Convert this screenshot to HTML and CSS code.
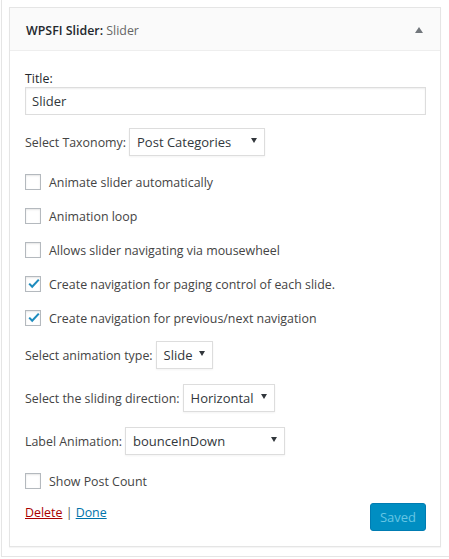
FILE: index.html
```html
<!DOCTYPE html>
<html>
<head>
<meta charset="utf-8">
<title>WPSFI Slider widget</title>
<link rel="stylesheet" href="styles.css">
</head>
<body>
<div class="holder">
  <div class="widget">
    <div class="widget-top">
      <h3 class="widget-title"><span class="name">WPSFI Slider:</span> <span class="in-title">Slider</span></h3>
      <svg class="toggle" width="8" height="6" viewBox="0 0 8 6"><polygon points="4,0 8,6 0,6" fill="#72777c"/></svg>
    </div>
    <div class="widget-inside">
      <label class="title-label">Title:</label>
      <div class="input">Slider</div>

      <div class="row row-tax">
        <span class="row-label">Select Taxonomy:</span>
        <span class="select w-tax"><span>Post Categories</span><svg class="caret" width="6" height="5" viewBox="0 0 6 5"><polygon points="0,0 6,0 3,5" fill="#32373c"/></svg></span>
      </div>

      <div class="check first"><span class="box"></span><span class="check-label">Animate slider automatically</span></div>
      <div class="check"><span class="box"></span><span class="check-label">Animation loop</span></div>
      <div class="check"><span class="box"></span><span class="check-label">Allows slider navigating via mousewheel</span></div>
      <div class="check"><span class="box"><svg width="16" height="16" viewBox="0 0 16 16"><path d="M4.2 7.6 L7.2 10.8 L13.8 3.6" fill="none" stroke="#1e8cbe" stroke-width="2.1"/></svg></span><span class="check-label">Create navigation for paging control of each slide.</span></div>
      <div class="check"><span class="box"><svg width="16" height="16" viewBox="0 0 16 16"><path d="M4.2 7.6 L7.2 10.8 L13.8 3.6" fill="none" stroke="#1e8cbe" stroke-width="2.1"/></svg></span><span class="check-label">Create navigation for previous/next navigation</span></div>

      <div class="row row-gap">
        <span class="row-label">Select animation type:</span>
        <span class="select w-type"><span>Slide</span><svg class="caret" width="6" height="5" viewBox="0 0 6 5"><polygon points="0,0 6,0 3,5" fill="#32373c"/></svg></span>
      </div>
      <div class="row row-gap">
        <span class="row-label">Select the sliding direction:</span>
        <span class="select w-dir"><span>Horizontal</span><svg class="caret" width="6" height="5" viewBox="0 0 6 5"><polygon points="0,0 6,0 3,5" fill="#32373c"/></svg></span>
      </div>
      <div class="row row-gap">
        <span class="row-label">Label Animation:</span>
        <span class="select w-anim"><span>bounceInDown</span><svg class="caret" width="6" height="5" viewBox="0 0 6 5"><polygon points="0,0 6,0 3,5" fill="#32373c"/></svg></span>
      </div>

      <div class="check first"><span class="box"></span><span class="check-label">Show Post Count</span></div>

      <div class="actions">
        <div class="links"><a class="delete" href="#">Delete</a> | <a class="done" href="#">Done</a></div>
        <span class="button">Saved</span>
      </div>
    </div>
  </div>
</div>
</body>
</html>
```
FILE: styles.css
```css
html, body {
  margin: 0;
  padding: 0;
  background: #fff;
  overflow: hidden;
}
body {
  font-family: "Open Sans", "Noto Sans", sans-serif;
  font-size: 12.4px;
  line-height: 17px;
  color: #444;
}
.holder {
  margin-left: 1px;
  border-left: 1px solid #e5e5e5;
  border-bottom: 1px solid #e5e5e5;
  box-shadow: 0 1px 1px rgba(0,0,0,.04);
  padding: 7px 0 9px 7px;
}
.widget {
  width: 432px;
  box-sizing: border-box;
  border: 1px solid #e5e5e5;
  box-shadow: 0 1px 1px rgba(0,0,0,.04);
  background: #fff;
}
.widget-top {
  height: 42px;
  background: #fafafa;
  border-bottom: 1px solid #eee;
  display: flex;
  justify-content: space-between;
  align-items: flex-start;
  padding: 0 17px 0 16px;
}
.widget-title {
  margin: 14px 0 0;
  font-size: 12.4px;
  line-height: 17px;
  font-weight: 400;
  color: #23282d;
}
.widget-title .name { font-weight: 600; }
.widget-title .in-title { color: #666; }
.toggle { margin-top: 19px; }
.widget-inside {
  padding: 19px 14px 15px 15px;
}
.title-label { display: block; color: #23282d; }
.input {
  height: 28px;
  box-sizing: border-box;
  border: 1px solid #ddd;
  box-shadow: inset 0 1px 2px rgba(0,0,0,.07);
  padding: 0 6px;
  line-height: 26px;
  font-size: 13px;
  color: #32373c;
}
.row {
  display: flex;
  align-items: center;
  height: 28px;
  color: #444;
}
.row-tax { margin-top: 13px; }
.row-gap { margin-top: 15px; }
.row-label { margin-right: 3px; }
.select {
  height: 28px;
  box-sizing: border-box;
  border: 1px solid #ddd;
  box-shadow: 0 1px 2px rgba(0,0,0,.05);
  display: flex;
  align-items: center;
  justify-content: space-between;
  padding: 0 7px 0 7px;
  font-size: 13px;
  color: #32373c;
  background: #fff;
}
.select .caret { margin-top: -3px; }
.w-tax { width: 136px; }
.w-type { width: 57px; }
.w-dir { width: 92px; }
.w-anim { width: 160px; }
.check {
  display: flex;
  align-items: center;
  height: 16px;
  margin-top: 18px;
}
.box {
  width: 16px;
  height: 16px;
  box-sizing: border-box;
  border: 1px solid #b4b9be;
  box-shadow: inset 0 1px 2px rgba(0,0,0,.1);
  background: #fff;
  margin-right: 8px;
  position: relative;
  flex: none;
}
.box svg { position: absolute; left: -1px; top: -1px; }
.check-label { color: #444; }
.actions {
  margin-top: 14px;
  display: flex;
  justify-content: space-between;
  align-items: flex-start;
}
.links { padding-top: 1px; color: #555; }
.delete { color: #a00; }
.done { color: #0073aa; }
.button {
  width: 56px;
  height: 28px;
  box-sizing: border-box;
  border: 1px solid #007cb2;
  border-radius: 3px;
  background: #008ec2;
  color: #66c6e4;
  display: flex;
  align-items: center;
  justify-content: center;
  font-size: 13px;
}
```
